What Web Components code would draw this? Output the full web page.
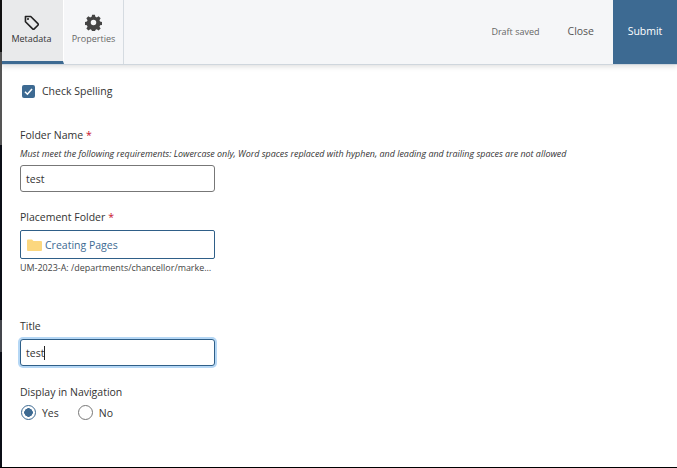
<!DOCTYPE html>
<html>
<head>
<meta charset="utf-8">
<style>
  html, body { margin: 0; height: 100%; background: #fff; }
  body { font-family: "Open Sans", sans-serif; color: #333; overflow: hidden; }
</style>
</head>
<body>
<edit-page>
  <edit-toolbar slot="bar"></edit-toolbar>
  <check-box>Check Spelling</check-box>
  <form-field style="margin-top:30px" label="Folder Name" required hint="Must meet the following requirements: Lowercase only, Word spaces replaced with hyphen, and leading and trailing spaces are not allowed">
    <text-box value="test"></text-box>
  </form-field>
  <form-field style="margin-top:18px" label="Placement Folder" required>
    <folder-box name="Creating Pages" path="UM-2023-A: /departments/chancellor/marke…"></folder-box>
  </form-field>
  <form-field style="margin-top:45px" label="Title">
    <text-box value="test" focused></text-box>
  </form-field>
  <form-field style="margin-top:19px" label="Display in Navigation">
    <radio-group></radio-group>
  </form-field>
</edit-page>

<script>
class EditPage extends HTMLElement {
  constructor() {
    super();
    this.attachShadow({ mode: "open" }).innerHTML = `
      <style>
        :host { display: flex; box-sizing: border-box; height: 468px; width: 677px; border-bottom: 1px solid #000; }
        .strip { width: 2px; flex: none; display: flex; flex-direction: column; background: #0b0e17; }
        .strip i { display: block; }
        .a { height: 52px; background: #111; }
        .b { height: 93px; background: #555; }
        .c { height: 32px; margin-top: 175px; background: #44464c; }
        .main { flex: 1; min-width: 0; display: flex; flex-direction: column; }
        .form { padding: 19px 0 0 18px; display: flex; flex-direction: column; align-items: flex-start; }
      </style>
      <div class="strip"><i class="a"></i><i class="b"></i><i class="c"></i></div>
      <div class="main">
        <slot name="bar"></slot>
        <div class="form"><slot></slot></div>
      </div>`;
  }
}

class EditToolbar extends HTMLElement {
  constructor() {
    super();
    this.attachShadow({ mode: "open" }).innerHTML = `
      <style>
        :host { display: flex; height: 64px; background: #f5f6f8; border-bottom: 1px solid #cfd6dd; box-shadow: 0 2px 5px rgba(0,0,0,.12); position: relative; font-size: 9px; }
        .tab { width: 60px; box-sizing: border-box; display: flex; flex-direction: column; align-items: center; padding-top: 14px; color: #666; border-right: 1px solid #d5dbe1; }
        .tab svg { width: 17px; height: 17px; }
        .tab span { margin-top: 1px; }
        .tab.on { background: #e9eaeb; color: #333; border-right: 1px solid #fff; border-bottom: 3px solid #3d6a92; height: 64px; padding-right: 2px; }
        .tab:nth-child(2) { width: 62px; }
        .end { margin-left: auto; display: flex; align-items: center; }
        .draft { color: #666; margin-right: 28px; padding-bottom: 2px; }
        .close { color: #555; font-size: 10.5px; margin-right: 19px; padding-bottom: 2px; }
        .submit { width: 64px; height: 62px; padding-bottom: 2px; background: #3d6a92; color: #fff; font-size: 10.5px; font-weight: 500; display: flex; align-items: center; justify-content: center; }
      </style>
      <div class="tab on">
        <svg viewBox="0 0 18 18"><path d="M2.6 2.6 H8.2 L15.8 10.2 a1.2 1.2 0 0 1 0 1.7 L11.9 15.8 a1.2 1.2 0 0 1 -1.7 0 L2.6 8.2 Z" fill="none" stroke="#222" stroke-width="1.7" stroke-linejoin="round"/><circle cx="5.3" cy="5.3" r="1.1" fill="#222"/></svg>
        <span>Metadata</span>
      </div>
      <div class="tab">
        <svg viewBox="0 0 24 24"><path fill="#444" fill-rule="evenodd" d="M10 1.5h4l.6 3a8 8 0 0 1 2 .9l2.6-1.7 2.9 2.9-1.7 2.6c.4.6.7 1.3.9 2l3 .6v4l-3 .6a8 8 0 0 1-.9 2l1.7 2.6-2.9 2.9-2.6-1.7a8 8 0 0 1-2 .9l-.6 3h-4l-.6-3a8 8 0 0 1-2-.9l-2.6 1.7-2.9-2.9 1.7-2.6a8 8 0 0 1-.9-2l-3-.6v-4l3-.6a8 8 0 0 1 .9-2L1.9 6.6l2.9-2.9 2.6 1.7a8 8 0 0 1 2-.9zM12 8.6a3.9 3.9 0 1 0 0 7.8 3.9 3.9 0 0 0 0-7.8z" transform="translate(0 -.5)"/></svg>
        <span>Properties</span>
      </div>
      <div class="end">
        <span class="draft">Draft saved</span>
        <span class="close">Close</span>
        <span class="submit">Submit</span>
      </div>`;
  }
}

class CheckBox extends HTMLElement {
  constructor() {
    super();
    this.attachShadow({ mode: "open" }).innerHTML = `
      <style>
        :host { display: flex; align-items: center; gap: 7px; font-size: 10.5px; color: #333; margin-left: 2px; }
        .box { width: 13px; height: 13px; border-radius: 2px; background: #3d6a92; display: flex; }
      </style>
      <span class="box"><svg viewBox="0 0 13 13" width="13" height="13"><path d="M3 6.8 5.4 9.2 10 4" fill="none" stroke="#fff" stroke-width="1.6"/></svg></span>
      <span><slot></slot></span>`;
  }
}

class FormField extends HTMLElement {
  constructor() {
    super();
    this.attachShadow({ mode: "open" });
  }

  connectedCallback() {
    const star = this.hasAttribute("required") ? `<span class="star">*</span>` : "";
    const hint = this.getAttribute("hint");
    this.shadowRoot.innerHTML = `
      <style>
        :host { display: block; }
        .label { font-size: 10.5px; line-height: 15px; color: #333; margin-bottom: 5px; }
        .star { color: #c8102e; margin-left: 3px; }
        .hint { font-size: 8.93px; line-height: 12px; font-style: italic; color: #333; margin-bottom: 5px; white-space: nowrap; }
      </style>
      <div class="label">${this.getAttribute("label")}${star}</div>
      ${hint ? `<div class="hint">${hint}</div>` : ""}
      <slot></slot>`;
  }
}

class TextBox extends HTMLElement {
  constructor() {
    super();
    this.attachShadow({ mode: "open" });
  }

  connectedCallback() {
    this.shadowRoot.innerHTML = `
      <style>
        :host { display: flex; align-items: center; box-sizing: border-box; width: 195px; height: 27px; padding: 0 5px; background: #fff; border: 1px solid #777; border-radius: 3px; font-size: 10.5px; color: #333; }
        :host([focused]) { border-color: #2f5f88; box-shadow: 0 0 0 2px #b5d7f5; }
        .caret { width: 1px; height: 14px; background: #222; display: none; }
        :host([focused]) .caret { display: block; }
      </style>
      <span>${this.getAttribute("value")}</span><i class="caret"></i>`;
  }
}

class FolderBox extends HTMLElement {
  constructor() {
    super();
    this.attachShadow({ mode: "open" });
  }

  connectedCallback() {
    this.shadowRoot.innerHTML = `
      <style>
        :host { display: block; width: 195px; }
        .box { display: flex; align-items: center; gap: 3px; box-sizing: border-box; height: 29px; padding: 0 6px; border: 1px solid #2f5f88; border-radius: 2px; font-size: 10.5px; color: #3d6a92; }
        .path { font-size: 8.93px; line-height: 12px; margin-top: 3px; color: #444; white-space: nowrap; }
      </style>
      <div class="box">
        <svg width="15" height="12" viewBox="0 0 15 12"><path d="M0 1.5A1 1 0 0 1 1 .5h4l1.5 1.5H14a1 1 0 0 1 1 1V11a1 1 0 0 1-1 1H1a1 1 0 0 1-1-1z" fill="#fbd77f"/></svg>
        <span>${this.getAttribute("name")}</span>
      </div>
      <div class="path">${this.getAttribute("path")}</div>`;
  }
}

class RadioGroup extends HTMLElement {
  constructor() {
    super();
    this.attachShadow({ mode: "open" }).innerHTML = `
      <style>
        :host { display: flex; align-items: center; font-size: 10.5px; color: #333; padding-left: 1px; margin-top: 1px; }
        .r { width: 15px; height: 15px; box-sizing: border-box; border-radius: 50%; border: 1.5px solid #777; margin-right: 6px; }
        .r.on { border-color: #3d6a92; background: radial-gradient(circle, #3d6a92 0 4px, #fff 4.5px); }
        .yes { margin-right: 19px; }
      </style>
      <span class="r on"></span><span class="yes">Yes</span>
      <span class="r"></span><span>No</span>`;
  }
}

customElements.define("edit-page", EditPage);
customElements.define("edit-toolbar", EditToolbar);
customElements.define("check-box", CheckBox);
customElements.define("form-field", FormField);
customElements.define("text-box", TextBox);
customElements.define("folder-box", FolderBox);
customElements.define("radio-group", RadioGroup);
</script>
</body>
</html>
